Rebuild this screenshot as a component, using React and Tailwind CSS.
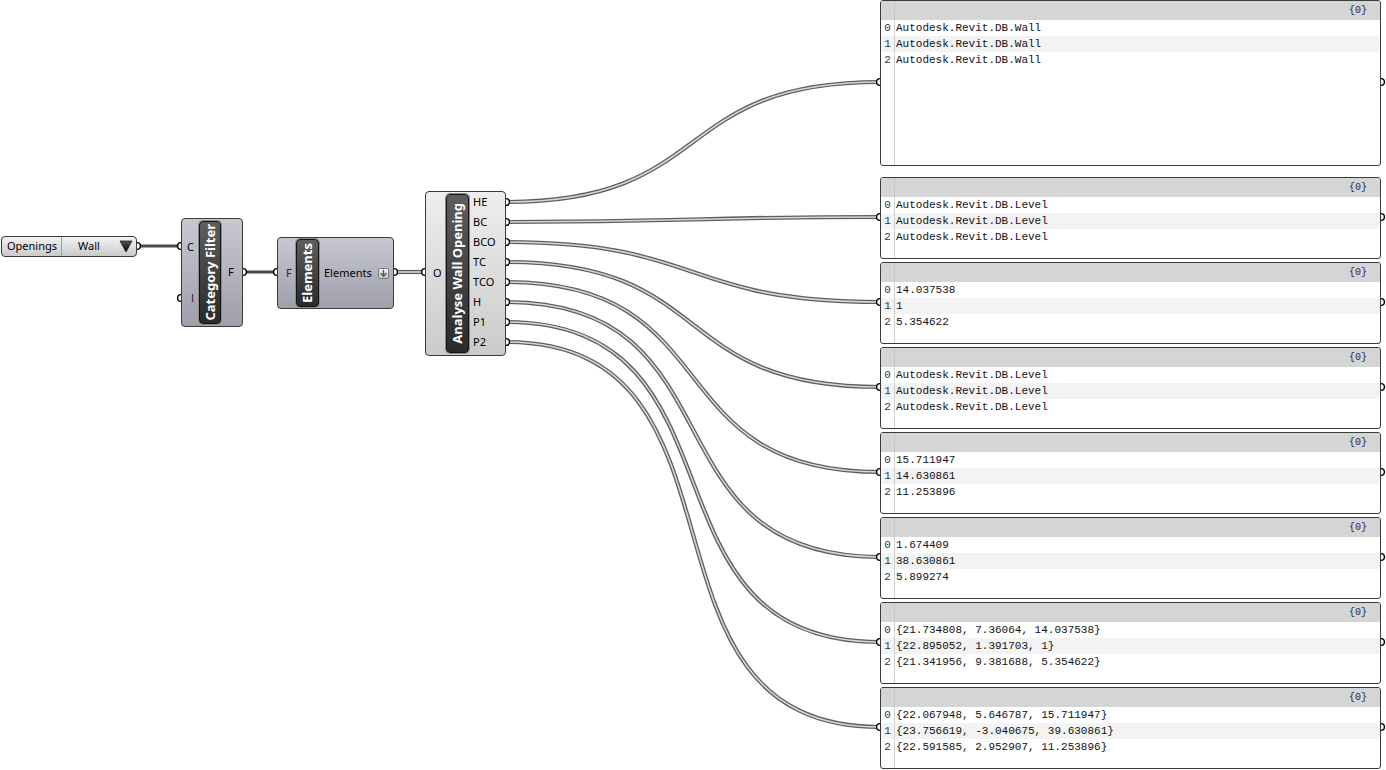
import React from "react";

const panels = [
  ["Autodesk.Revit.DB.Level", "Autodesk.Revit.DB.Level", "Autodesk.Revit.DB.Level"],
  ["14.037538", "1", "5.354622"],
  ["Autodesk.Revit.DB.Level", "Autodesk.Revit.DB.Level", "Autodesk.Revit.DB.Level"],
  ["15.711947", "14.630861", "11.253896"],
  ["1.674409", "38.630861", "5.899274"],
  ["{21.734808, 7.36064, 14.037538}", "{22.895052, 1.391703, 1}", "{21.341956, 9.381688, 5.354622}"],
  ["{22.067948, 5.646787, 15.711947}", "{23.756619, -3.040675, 39.630861}", "{22.591585, 2.952907, 11.253896}"],
];

const outputs = ["HE", "BC", "BCO", "TC", "TCO", "H", "P1", "P2"];

function wirePath(x1, y1, x2, y2) {
  const dx = x2 - x1;
  const d = dx * 0.5 + Math.abs(y2 - y1) * 0.2;
  return `M${x1},${y1} C${x1 + d},${y1} ${x2 - d},${y2} ${x2},${y2}`;
}

function Panel({ rows, className }) {
  return (
    <div className={`flex flex-col w-[501px] border border-[#3b3b3b] rounded-[3px] bg-white overflow-hidden text-[11px] leading-none [font-family:'Liberation_Mono','Courier_New',monospace] ${className}`}>
      <div className="flex h-[19px] shrink-0 bg-[#d5d5d5]">
        <div className="w-[14px] border-r border-[#c6c6c6]" />
        <div className="flex-1 flex items-center justify-end pr-[13px] text-[10px] text-[#2b2b3d]">{"{0}"}</div>
      </div>
      {rows.map((r, i) => (
        <div key={i} className={`flex h-[16px] shrink-0 items-center ${i === 1 ? "bg-[#f3f3f3]" : ""}`}>
          <div className="w-[14px] h-full flex items-center justify-center border-r border-[#cfcfcf] text-[#333]">{i}</div>
          <div className="pl-[1px] text-[#111] whitespace-pre">{r}</div>
        </div>
      ))}
      <div className="flex-1 w-[14px] border-r border-[#cfcfcf]" />
    </div>
  );
}

function Label({ text, w }) {
  return (
    <div className={`${w} h-full rounded-[4px] border border-[#121212] bg-linear-to-b from-[#5e5e5e] to-[#2a2a2a] shadow-[0_0_0_1px_#8c8c8c] flex items-center justify-center overflow-hidden`}>
      <span className="[writing-mode:vertical-rl] rotate-180 text-white font-bold text-[13px] leading-none whitespace-nowrap">{text}</span>
    </div>
  );
}

export default function App() {
  const panelTops = [177, 262, 347, 432, 517, 602, 687];
  const outYs = outputs.map((_, i) => 202 + i * 20);
  const panelGripYs = [82, ...panelTops.map((t) => t + 40)];

  return (
    <div className="relative w-[1386px] h-[770px] overflow-hidden bg-white [font-family:'Noto_Sans','Liberation_Sans',sans-serif]">
      <svg className="absolute inset-0" width="1386" height="770">
        {/* item wires */}
        <line x1="137" y1="246" x2="181" y2="246" stroke="#4a4a4a" strokeWidth="3" />
        <line x1="243" y1="272" x2="277" y2="272" stroke="#4a4a4a" strokeWidth="3" />
        {/* list wires */}
        {[[394, 272, 425, 272], ...outYs.map((y, i) => [506, y, 880, panelGripYs[i]])].map((w, i) => (
          <g key={i}>
            <path d={wirePath(...w)} fill="none" stroke="#5e5e5e" strokeWidth="4.2" />
            <path d={wirePath(...w)} fill="none" stroke="#d6d6d6" strokeWidth="1.6" />
          </g>
        ))}
        {/* grips */}
        {[
          [137, 246], [181, 246], [181, 298], [243, 272], [277, 272], [394, 272], [425, 272],
          ...outYs.map((y) => [506, y]),
          ...panelGripYs.map((y) => [880, y]),
          ...panelGripYs.map((y) => [1381, y]),
        ].map(([x, y], i) => (
          <circle key={i} cx={x} cy={y} r="3.4" fill="#fff" stroke="#000" strokeWidth="1.4" />
        ))}
      </svg>

      {/* Value list */}
      <div className="absolute left-[1px] top-[236px] w-[136px] h-[21px] rounded-[4px] border border-[#3a3a3a] bg-linear-to-b from-[#f2f2f2] to-[#cacaca] flex items-center text-[11px] text-black">
        <div className="w-[60px] h-full flex items-center pl-[5px] border-r border-[#a0a0a0]">Openings</div>
        <div className="flex-1 text-center pr-[3px]">Wall</div>
        <svg width="14" height="13" viewBox="0 0 14 13" className="mr-[3px]">
          <defs>
            <linearGradient id="tri" x1="0" y1="0" x2="0" y2="1">
              <stop offset="0" stopColor="#555" />
              <stop offset="1" stopColor="#000" />
            </linearGradient>
          </defs>
          <polygon points="1,1 13,1 7,12" fill="url(#tri)" stroke="#222" strokeWidth="0.8" />
        </svg>
      </div>

      {/* Category Filter */}
      <div className="absolute left-[181px] top-[218px] w-[62px] h-[109px] rounded-[4px] border border-[#3a3a3a] bg-linear-to-b from-[#c8c8d1] to-[#9f9fad] flex py-[2px] text-[11px] text-black">
        <div className="w-[17px] flex flex-col">
          <div className="flex-1 flex items-center pl-[5px]">C</div>
          <div className="flex-1 flex items-center pl-[9px] text-[#4b1050] [font-family:'Liberation_Sans',sans-serif]">I</div>
        </div>
        <Label text="Category Filter" w="w-[22px]" />
        <div className="flex-1 flex items-center pl-[7px]">F</div>
      </div>

      {/* Elements */}
      <div className="absolute left-[277px] top-[237px] w-[117px] h-[72px] rounded-[4px] border border-[#3a3a3a] bg-linear-to-b from-[#c8c8d1] to-[#9f9fad] flex py-[1px] text-[11px] text-black">
        <div className="w-[18px] flex items-center pl-[8px] text-[#4b1050]">F</div>
        <Label text="Elements" w="w-[23px]" />
        <div className="flex-1 flex items-center pl-[5px] gap-[6px]">
          <span>Elements</span>
          <div className="w-[11px] h-[11px] rounded-[2px] border border-[#7a7a7a] bg-linear-to-b from-[#fafafa] to-[#c4c4c4] flex items-center justify-center">
            <svg width="9" height="9" viewBox="0 0 9 9">
              <path d="M4.5 1.2 V7 M2 4.6 L4.5 7.2 L7 4.6" fill="none" stroke="#555" strokeWidth="1.4" strokeLinecap="round" strokeLinejoin="round" />
            </svg>
          </div>
        </div>
      </div>

      {/* Analyse Wall Opening */}
      <div className="absolute left-[425px] top-[191px] w-[81px] h-[165px] rounded-[4px] border border-[#3a3a3a] bg-linear-to-b from-[#eeeeee] to-[#cbcbcb] flex text-[11px] text-black">
        <div className="w-[20px] flex items-center pl-[7px]">O</div>
        <div className="w-[23px] py-[2px] flex">
          <Label text="Analyse Wall Opening" w="w-[23px]" />
        </div>
        <div className="flex-1 flex flex-col pl-[4px]">
          {outputs.map((o) => (
            <div key={o} className="h-[20px] flex items-center">{o}</div>
          ))}
        </div>
      </div>

      {/* Panels */}
      <Panel
        rows={["Autodesk.Revit.DB.Wall", "Autodesk.Revit.DB.Wall", "Autodesk.Revit.DB.Wall"]}
        className="absolute left-[880px] top-0 h-[166px]"
      />
      <div className="absolute left-[880px] top-[177px] flex flex-col gap-[3px]">
        {panels.map((rows, i) => (
          <Panel key={i} rows={rows} className="h-[82px]" />
        ))}
      </div>
    </div>
  );
}
